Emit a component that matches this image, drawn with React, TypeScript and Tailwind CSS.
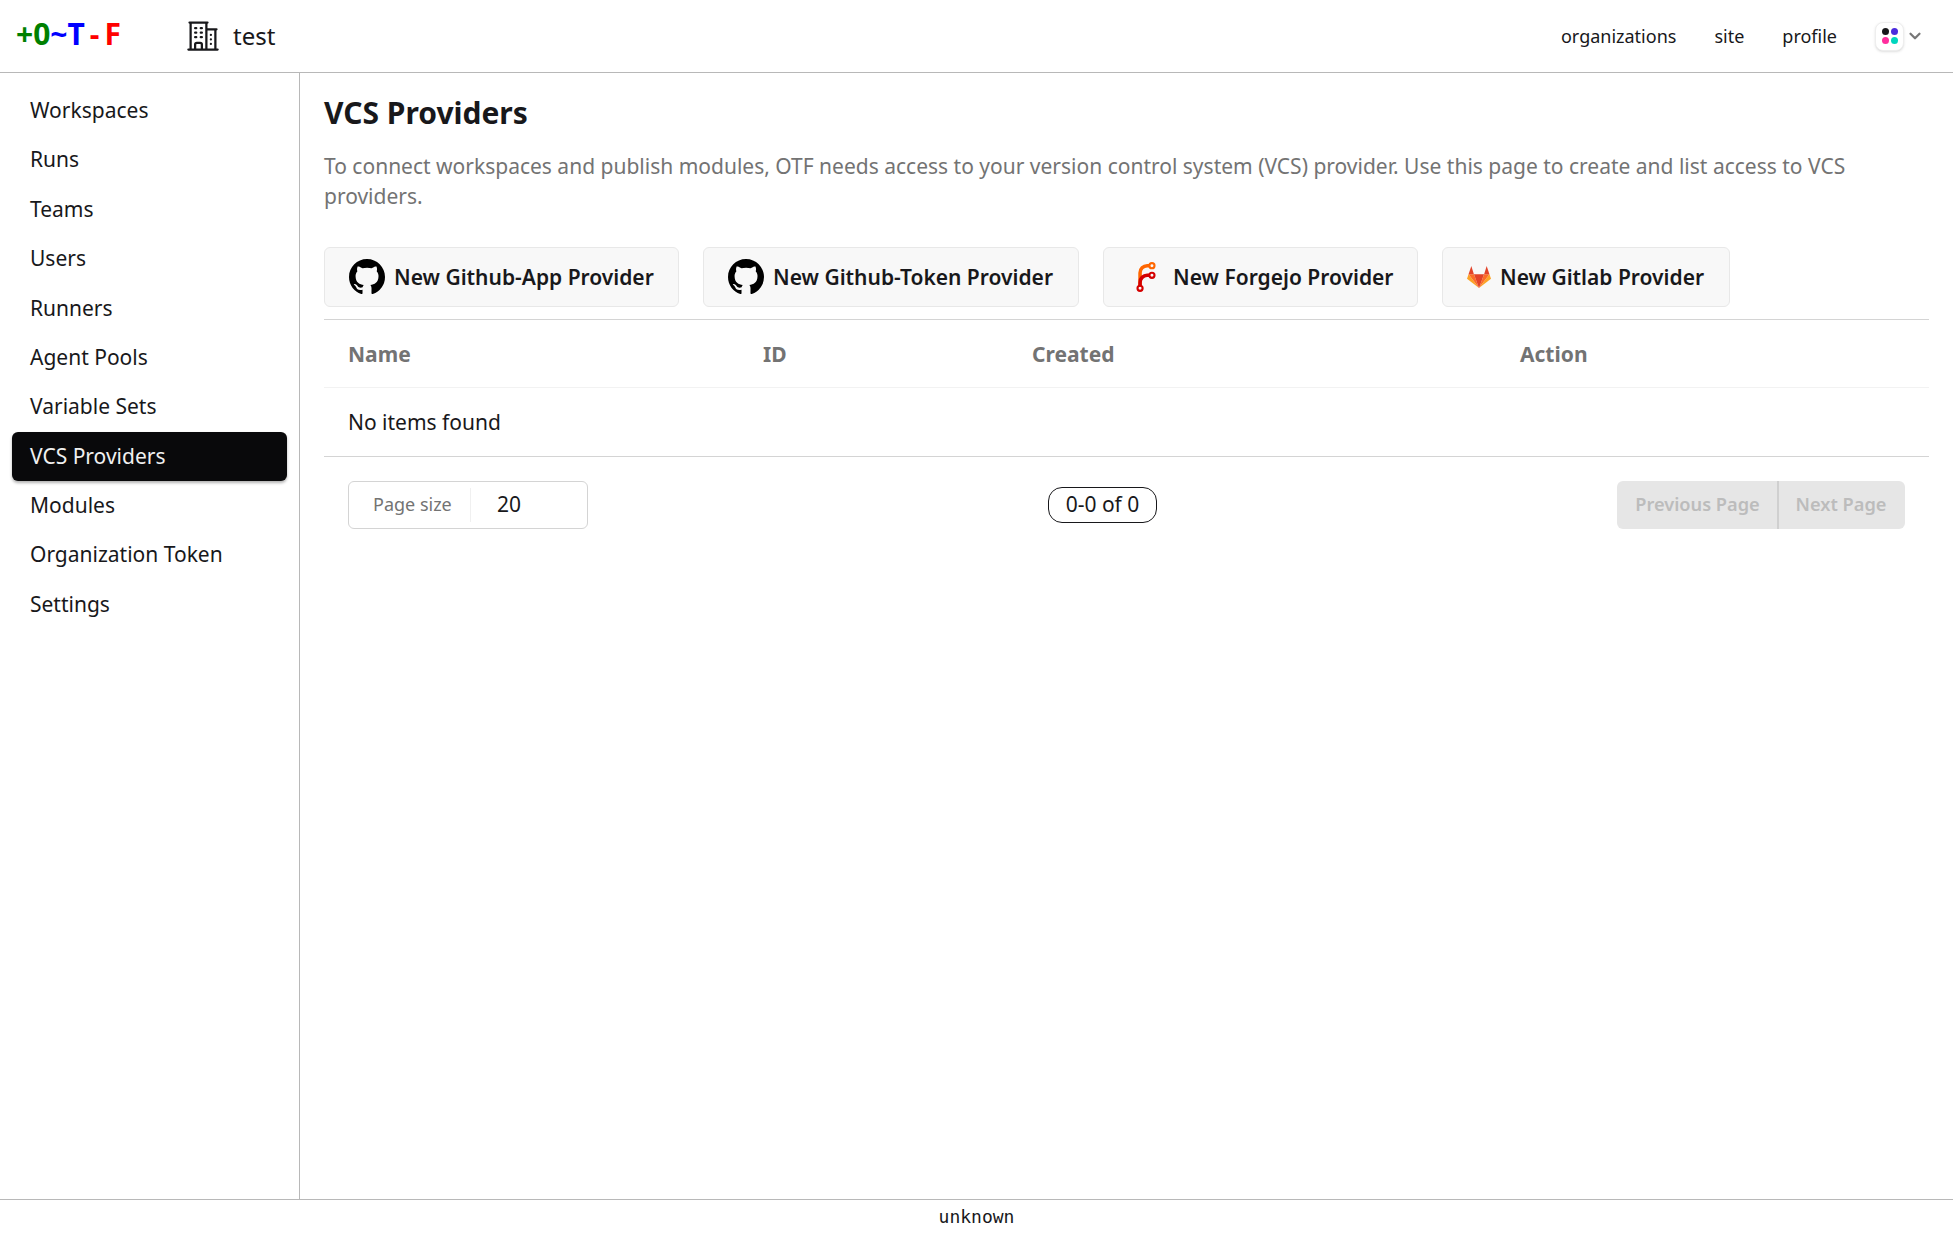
import React from "react";
import { HiOutlineBuildingOffice2 } from "react-icons/hi2";
import { FiChevronDown } from "react-icons/fi";

const nav = ["Workspaces", "Runs", "Teams", "Users", "Runners", "Agent Pools", "Variable Sets", "VCS Providers", "Modules", "Organization Token", "Settings"];

const GH = "M8 0C3.58 0 0 3.58 0 8c0 3.54 2.29 6.53 5.47 7.59.4.07.55-.17.55-.38 0-.19-.01-.82-.01-1.49-2.01.37-2.53-.49-2.69-.94-.09-.23-.48-.94-.82-1.13-.28-.15-.68-.52-.01-.53.63-.01 1.08.58 1.23.82.72 1.21 1.87.87 2.33.66.07-.52.28-.87.51-1.07-1.78-.2-3.64-.89-3.64-3.95 0-.87.31-1.59.82-2.15-.08-.2-.36-1.02.08-2.12 0 0 .67-.21 2.2.82.64-.18 1.32-.27 2-.27.68 0 1.36.09 2 .27 1.53-1.04 2.2-.82 2.2-.82.44 1.1.16 1.92.08 2.12.51.56.82 1.27.82 2.15 0 3.07-1.87 3.75-3.65 3.95.29.25.54.73.54 1.48 0 1.07-.01 1.93-.01 2.2 0 .21.15.46.55.38A8.013 8.013 0 0016 8c0-4.42-3.58-8-8-8z";

function Github() {
  return (
    <svg viewBox="0 0 16 16" className="w-9 h-9" fill="#000">
      <path fillRule="evenodd" d={GH} />
    </svg>
  );
}

function Forgejo() {
  return (
    <svg viewBox="0 0 212 212" className="w-9 h-[30px]">
      <g transform="translate(6,6)">
        <path d="M58 168 v-98 a50 50 0 0 1 50-50 h20" fill="none" stroke="#ff6600" strokeWidth="25" />
        <path d="M58 168 v-30 a50 50 0 0 1 50-50 h20" fill="none" stroke="#d40000" strokeWidth="25" />
        <circle cx="142" cy="20" r="18" fill="none" stroke="#ff6600" strokeWidth="15" />
        <circle cx="142" cy="88" r="18" fill="none" stroke="#d40000" strokeWidth="15" />
        <circle cx="58" cy="180" r="18" fill="none" stroke="#d40000" strokeWidth="15" />
      </g>
    </svg>
  );
}

function Gitlab() {
  return (
    <svg viewBox="3 6 94 86" className="w-[24px] h-[22px]" preserveAspectRatio="none">
      <polygon points="50,92 3,56 9,38" fill="#fca326" />
      <polygon points="50,92 97,56 91,38" fill="#fca326" />
      <polygon points="50,92 9,38 30,38" fill="#fc6d26" />
      <polygon points="50,92 91,38 70,38" fill="#fc6d26" />
      <polygon points="50,92 30,38 70,38" fill="#e24329" />
      <polygon points="9,38 30,38 20,6" fill="#e24329" />
      <polygon points="91,38 70,38 80,6" fill="#e24329" />
    </svg>
  );
}

function ProviderButton({ icon, label, cls }: { icon: React.ReactNode; label: string; cls: string }) {
  return (
    <button className={`h-[60px] flex items-center gap-[9px] pl-[24px] rounded-[6px] border border-[#e8e8e8] bg-[#f8f8f8] text-[21px] font-semibold text-[#18181b] ${cls}`}>
      {icon}
      <span className="pt-[1px]">{label}</span>
    </button>
  );
}

export default function App() {
  return (
    <div className="h-screen flex flex-col bg-white text-[21px] text-[#18181b] font-['Noto_Sans',sans-serif]">
      <header className="h-[73px] shrink-0 flex items-center border-b border-[#b8b8b8] pl-[16px] pr-[30px]">
        <div className="w-[172px] -mt-[4px] flex text-[30px] leading-none font-bold">
          <span className="text-[#008000]">+0</span>
          <span className="text-[#0000ff]">~T</span>
          <span className="text-[#ff0000] ml-[5px] tracking-[5px]">-F</span>
        </div>
        <HiOutlineBuildingOffice2 className="-ml-[3px] w-9 h-9 text-[#18181b]" />
        <span className="ml-[12px] text-[24px]">test</span>
        <nav className="ml-auto flex items-center gap-[38px] text-[18px]">
          <span>organizations</span>
          <span>site</span>
          <span>profile</span>
        </nav>
        <div className="ml-[38px] flex items-center">
          <div className="w-[29px] h-[29px] rounded-[8px] bg-white border border-[#eeeeee] shadow-sm grid grid-cols-[7px_7px] gap-[2px] place-content-center">
            <i className="block w-[7px] h-[7px] rounded-full bg-[#18181b]" />
            <i className="block w-[7px] h-[7px] rounded-full bg-[#4b2bdd]" />
            <i className="block w-[7px] h-[7px] rounded-full bg-[#ff2d9e]" />
            <i className="block w-[7px] h-[7px] rounded-full bg-[#00d5be]" />
          </div>
          <FiChevronDown className="ml-[2px] -mr-[1px] w-[18px] h-[18px] text-[#777777]" strokeWidth={3} />
        </div>
      </header>

      <div className="flex-1 flex min-h-0">
        <aside className="w-[300px] shrink-0 border-r border-[#b8b8b8] pt-[13px] pl-[12px] pr-[12px]">
          <ul className="flex flex-col">
            {nav.map((n) => (
              <li key={n}>
                <div className={`h-[49.4px] flex items-center px-[18px] rounded-[6px] ${n === "VCS Providers" ? "bg-[#09090b] text-[#f0f0f0] shadow-[0_2px_3px_rgba(0,0,0,0.3)]" : ""}`}>
                  {n}
                </div>
              </li>
            ))}
          </ul>
        </aside>

        <main className="flex-1 min-w-0 pl-[24px] pr-[24px]">
          <h1 className="mt-[20px] text-[30px] leading-[40px] font-bold text-[#18181b]">VCS Providers</h1>
          <p className="mt-[18px] leading-[30px] text-[#737373]">
            To connect workspaces and publish modules, OTF needs access to your version control system (VCS) provider. Use this page to create and list access to VCS providers.
          </p>
          <div className="mt-[36px] flex gap-[24px]">
            <ProviderButton cls="w-[355px]" icon={<Github />} label="New Github-App Provider" />
            <ProviderButton cls="w-[376px]" icon={<Github />} label="New Github-Token Provider" />
            <ProviderButton cls="w-[315px]" icon={<Forgejo />} label="New Forgejo Provider" />
            <ProviderButton cls="w-[288px]" icon={<Gitlab />} label="New Gitlab Provider" />
          </div>
          <div className="mt-[12px] border-t border-[#d4d4d4]">
            <div className="h-[68px] flex items-center border-b border-[#f2f2f2] pt-[2px] px-[24px] font-bold text-[#737373]">
              <span className="w-[415px]">Name</span>
              <span className="w-[269px]">ID</span>
              <span className="w-[488px]">Created</span>
              <span>Action</span>
            </div>
            <div className="h-[69px] flex items-center border-b border-[#d4d4d4] pt-[1px] px-[24px]">No items found</div>
            <div className="mt-[24px] flex items-center justify-between px-[24px]">
              <div className="w-[240px] h-[48px] flex items-center rounded-[6px] border border-[#d4d4d4]">
                <span className="w-[122px] h-[34px] flex items-center pl-[24px] pb-[1px] border-r border-[#f0f0f0] text-[18px] text-[#737373]">Page size</span>
                <span className="ml-[26px]">20</span>
              </div>
              <div className="w-[109px] h-[36px] flex items-center justify-center rounded-[14px] border border-[#18181b]">0-0 of 0</div>
              <div className="flex h-[48px] rounded-[6px] bg-[#e6e6e6] text-[18.2px] font-semibold text-[#bcbcbc]">
                <span className="w-[162px] pl-[1px] flex items-center justify-center border-r-2 border-[#d0d0d0]">Previous Page</span>
                <span className="w-[126px] pr-[2px] flex items-center justify-center">Next Page</span>
              </div>
            </div>
          </div>
        </main>
      </div>

      <footer className="h-[37px] shrink-0 flex items-center justify-center border-t border-[#b8b8b8] pb-[3px] text-[18px] font-['DejaVu_Sans_Mono',monospace]">unknown</footer>
    </div>
  );
}
